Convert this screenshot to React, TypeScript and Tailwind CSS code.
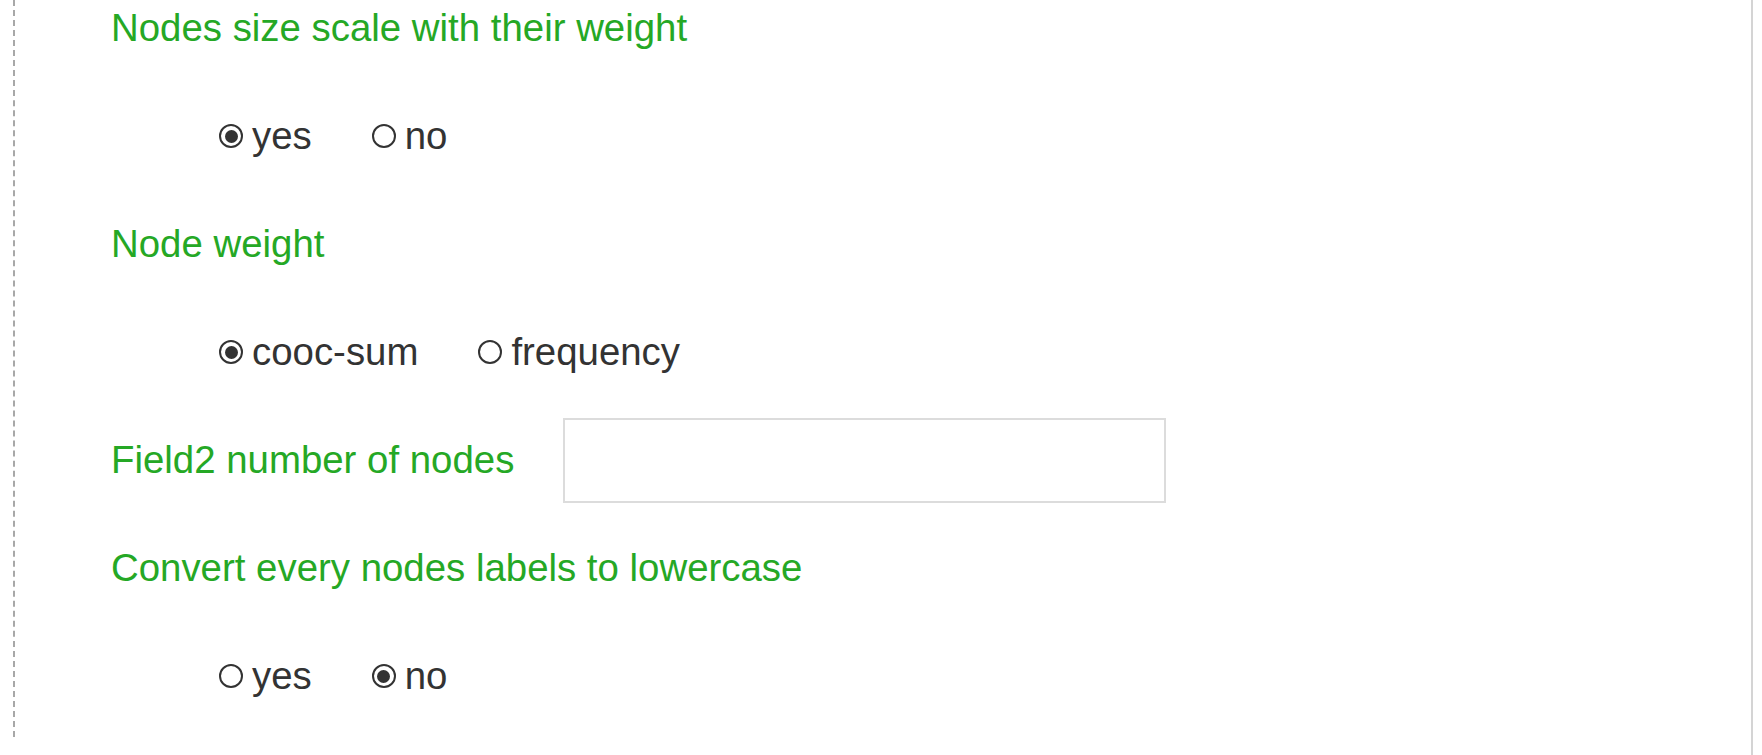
import { useState } from 'react';

const FONT = { fontFamily: '"Liberation Sans", Arial, sans-serif' };

function Radio({ checked, label, onClick }: { checked: boolean; label: string; onClick: () => void }) {
  return (
    <label onClick={onClick} className="flex items-center cursor-pointer">
      <span className="flex items-center justify-center w-[24px] h-[24px] mr-[9px] rounded-full border-2 border-[#333] bg-white">
        {checked && <span className="w-[13px] h-[13px] rounded-full bg-[#333]" />}
      </span>
      <span className="text-[#333]">{label}</span>
    </label>
  );
}

function RadioRow({ options, value, onChange }: { options: string[]; value: string; onChange: (v: string) => void }) {
  return (
    <div className="h-[56px] flex items-center gap-[60px] pl-[108px]">
      {options.map((o) => (
        <Radio key={o} label={o} checked={value === o} onClick={() => onChange(o)} />
      ))}
    </div>
  );
}

export default function App() {
  const [scale, setScale] = useState('yes');
  const [weight, setWeight] = useState('cooc-sum');
  const [lower, setLower] = useState('no');

  return (
    <div className="w-full h-[755px] bg-white flex overflow-hidden text-[38.4px] leading-[56px]" style={FONT}>
      <div className="ml-[13px] h-[737px] flex-1 border-l-2 border-dashed border-[#a8a8a8] pl-[96px]">
        <div className="flex flex-col gap-[52px]">
          <div className="h-[56px] flex items-center text-[#25a825]">Nodes size scale with their weight</div>
          <RadioRow options={['yes', 'no']} value={scale} onChange={setScale} />

          <div className="h-[56px] flex items-center text-[#25a825]">Node weight</div>
          <RadioRow options={['cooc-sum', 'frequency']} value={weight} onChange={setWeight} />

          <div className="h-[56px] flex items-center gap-[49px]">
            <span className="text-[#25a825]">Field2 number of nodes</span>
            <input
              type="text"
              className="w-[603px] h-[85px] shrink-0 border-2 border-[#dcdcdc] bg-white outline-none px-3 text-[#333]"
            />
          </div>

          <div className="h-[56px] flex items-center text-[#25a825]">Convert every nodes labels to lowercase</div>
          <RadioRow options={['yes', 'no']} value={lower} onChange={setLower} />
        </div>
      </div>
      <div className="w-[2px] h-full bg-[#d4d4d4] ml-[93px]" />
      <div className="w-[9px] h-full" />
    </div>
  );
}
